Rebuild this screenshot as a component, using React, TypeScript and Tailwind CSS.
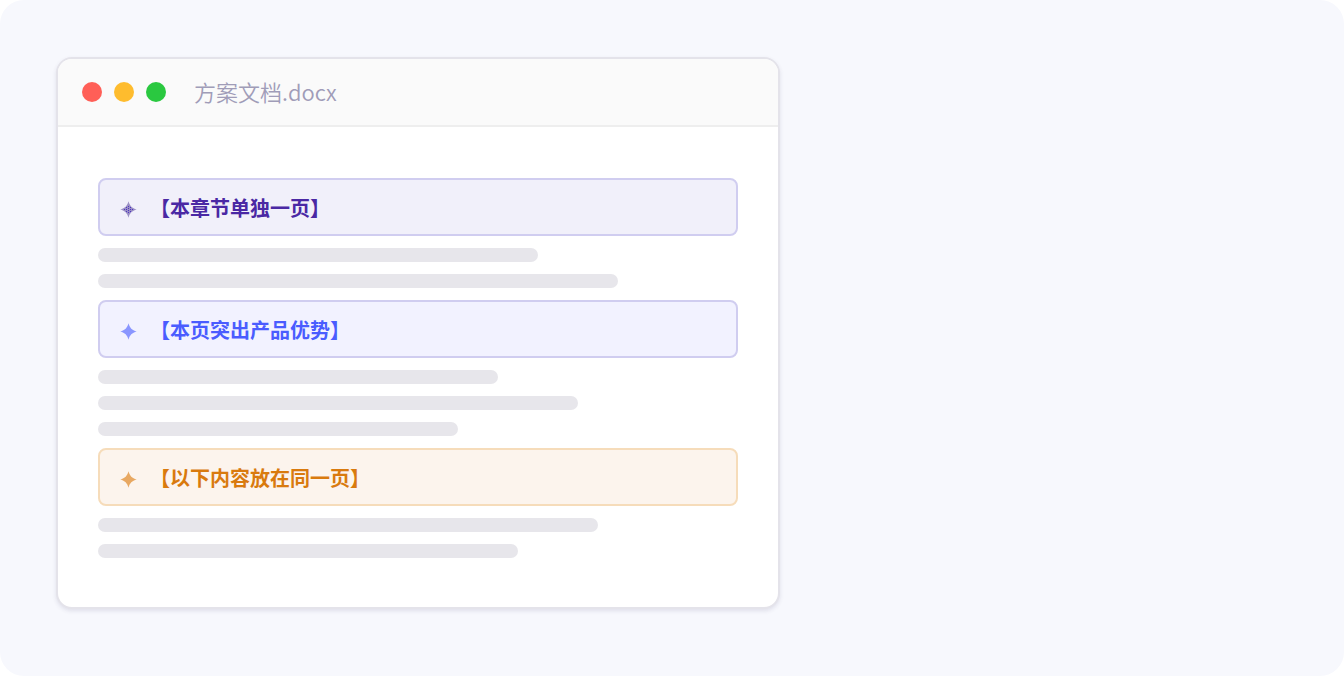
import React from 'react';

// --- Data ---

type Tone = 'purple' | 'blue' | 'orange';

type Block =
  | { kind: 'note'; tone: Tone; text: string }
  | { kind: 'line'; width: string };

const blocks: Block[] = [
  { kind: 'note', tone: 'purple', text: '【本章节单独一页】' },
  { kind: 'line', width: 'w-[440px]' },
  { kind: 'line', width: 'w-[520px]' },
  { kind: 'note', tone: 'blue', text: '【本页突出产品优势】' },
  { kind: 'line', width: 'w-[400px]' },
  { kind: 'line', width: 'w-[480px]' },
  { kind: 'line', width: 'w-[360px]' },
  { kind: 'note', tone: 'orange', text: '【以下内容放在同一页】' },
  { kind: 'line', width: 'w-[500px]' },
  { kind: 'line', width: 'w-[420px]' },
];

// --- UI Components ---

const Sparkle = ({ className, dotted }: { className: string; dotted: boolean }) => (
  <svg className={`w-[17px] h-[17px] shrink-0 ${className}`} viewBox="0 0 17 17" fill="currentColor">
    <path d="M8.5 0.3C9.8 5 12 7.2 16.7 8.5C12 9.8 9.8 12 8.5 16.7C7.2 12 5 9.8 0.3 8.5C5 7.2 7.2 5 8.5 0.3Z" />
    {dotted && (
      <path
        d="M8 5h1v1h-1zM6 6h1v1h-1zM10 6h1v1h-1zM8 7h1v1h-1zM4 8h1v1h-1zM6 8h1v1h-1zM10 8h1v1h-1zM12 8h1v1h-1zM8 9h1v1h-1zM6 10h1v1h-1zM10 10h1v1h-1zM8 11h1v1h-1z"
        className="fill-[#4f35c0]"
      />
    )}
  </svg>
);

const Note = ({ tone, text }: { tone: Tone; text: string }) => {
  const tones = {
    purple: { box: 'bg-[#f1f0fa] border-[#d0cdf0] text-[#4a28a4]', icon: 'text-[#9a8fc4]' },
    blue: { box: 'bg-[#f2f2ff] border-[#d0cdf0] text-[#4a5cff]', icon: 'text-[#8a96ff]' },
    orange: { box: 'bg-[#fcf4ed] border-[#f6dcba] text-[#d97a0e]', icon: 'text-[#e8a862]' },
  };

  return (
    <div className={`flex items-center h-[58px] pt-0.5 pl-5 rounded-lg border-2 ${tones[tone].box}`}>
      <Sparkle className={`mt-0.5 ${tones[tone].icon}`} dotted={tone === 'purple'} />
      <span className="ml-[13px] text-[20px] leading-[30px] font-bold whitespace-nowrap">{text}</span>
    </div>
  );
};

const TitleBar = ({ name }: { name: string }) => (
  <div className="flex items-center gap-3 h-[68px] px-6 bg-[#fafafa] border-b-2 border-[#eeeeee]">
    <span className="w-5 h-5 rounded-full bg-[#ff5f57]" />
    <span className="w-5 h-5 rounded-full bg-[#febc2e]" />
    <span className="w-5 h-5 rounded-full bg-[#2ac840]" />
    <span className="ml-4 pb-0.5 text-[22px] leading-8 font-[350] text-[#a09cb8]">{name}</span>
  </div>
);

// --- Main ---

export default function App() {
  return (
    <div className="w-[1344px] h-[676px] pt-[57px] pl-14 bg-[#f7f8fd] rounded-[24px] overflow-hidden font-['Noto_Sans_CJK_SC',sans-serif]">
      <div className="w-[724px] h-[552px] bg-white border-2 border-[#e4e3ea] rounded-[16px] overflow-hidden shadow-[0_2px_4px_rgba(60,50,100,0.12)]">
        <TitleBar name="方案文档.docx" />
        <div className="flex flex-col gap-3 px-10 pt-[51px]">
          {blocks.map((block, i) =>
            block.kind === 'note' ? (
              <Note key={i} tone={block.tone} text={block.text} />
            ) : (
              <div key={i} className={`h-[14px] rounded-full bg-[#e7e6eb] ${block.width}`} />
            )
          )}
        </div>
      </div>
    </div>
  );
}
